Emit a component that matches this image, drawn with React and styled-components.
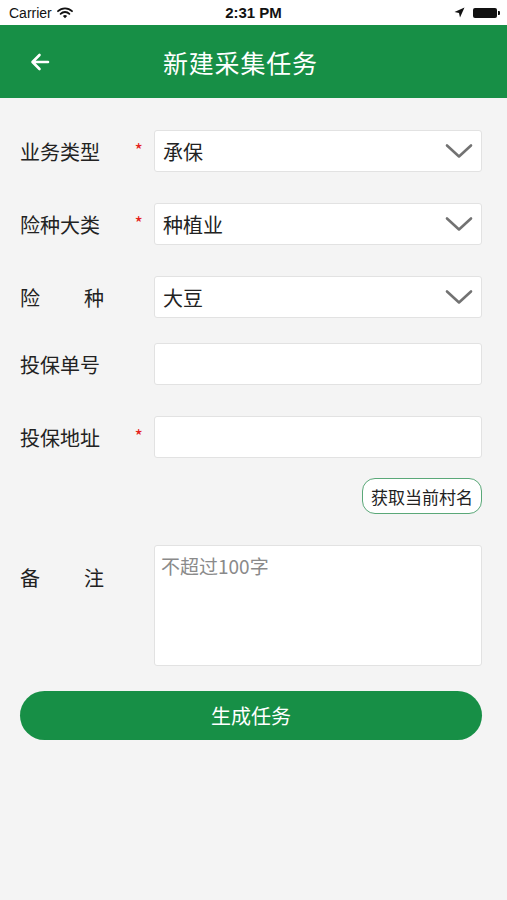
import styled, { createGlobalStyle } from "styled-components"

const GlobalStyle = createGlobalStyle`
  body {
    margin: 0;
    background: #f4f4f4;
    font-family: "Noto Sans CJK SC", "Noto Sans", sans-serif;
  }
`

function App() {
  return (
    <Page>
      <GlobalStyle />
      <StatusBar>
        <Carrier>
          Carrier
          <svg width="16" height="12" viewBox="0 0 16 12">
            <path d="M1 4.2a10 10 0 0 1 14 0" fill="none" stroke="#111" strokeWidth="1.8" strokeLinecap="round" />
            <path d="M3.6 6.8a6.3 6.3 0 0 1 8.8 0" fill="none" stroke="#111" strokeWidth="1.8" strokeLinecap="round" />
            <path d="M8 11.2 5.9 9a3 3 0 0 1 4.2 0z" fill="#111" />
          </svg>
        </Carrier>
        <Clock>2:31 PM</Clock>
        <StatusRight>
          <svg width="11" height="11" viewBox="0 0 11 11">
            <path d="M10.5 0.5 0.5 5 5 6 6 10.5z" fill="#111" />
          </svg>
          <Battery />
        </StatusRight>
      </StatusBar>

      <Header>
        <BackButton>
          <svg width="24" height="24" viewBox="0 0 24 24">
            <path d="M20 12H5M11.5 5 4.5 12l7 7" fill="none" stroke="#fff" strokeWidth="2.6" strokeLinecap="round" strokeLinejoin="round" />
          </svg>
        </BackButton>
        <Title>新建采集任务</Title>
      </Header>

      <Form>
        <Row $top={32}>
          <Label>业务类型</Label>
          <Star>*</Star>
          <Field>
            <FieldText>承保</FieldText>
            <Chevron />
          </Field>
        </Row>
        <Row $top={31}>
          <Label>险种大类</Label>
          <Star>*</Star>
          <Field>
            <FieldText>种植业</FieldText>
            <Chevron />
          </Field>
        </Row>
        <Row $top={31}>
          <Label $spread>险种</Label>
          <Star />
          <Field>
            <FieldText>大豆</FieldText>
            <Chevron />
          </Field>
        </Row>
        <Row $top={25}>
          <Label>投保单号</Label>
          <Star />
          <Field />
        </Row>
        <Row $top={31}>
          <Label>投保地址</Label>
          <Star>*</Star>
          <Field />
        </Row>

        <ActionLine>
          <VillageButton>获取当前村名</VillageButton>
        </ActionLine>

        <NoteRow>
          <Label $spread>备注</Label>
          <Star />
          <NoteBox>不超过100字</NoteBox>
        </NoteRow>

        <SubmitButton>生成任务</SubmitButton>
      </Form>
    </Page>
  )
}

function Chevron() {
  return (
    <ChevronIcon width="28" height="16" viewBox="0 0 28 16">
      <path d="M2 2.5 14 13.5 26 2.5" fill="none" stroke="#727272" strokeWidth="2.6" strokeLinecap="round" strokeLinejoin="round" />
    </ChevronIcon>
  )
}

const Page = styled.div`
  min-height: 900px;
  background: #f4f4f4;
`
const StatusBar = styled.div`
  height: 25px;
  background: #fff;
  display: flex;
  align-items: center;
  justify-content: space-between;
  padding: 0 10px 0 9px;
  font-family: "Liberation Sans", Arial, sans-serif;
  color: #111;
  position: relative;
`
const Carrier = styled.div`
  display: flex;
  align-items: center;
  gap: 5px;
  font-size: 14px;
`
const Clock = styled.div`
  position: absolute;
  left: 0;
  right: 0;
  text-align: center;
  font-size: 15px;
  font-weight: bold;
  pointer-events: none;
`
const StatusRight = styled.div`
  display: flex;
  align-items: center;
  gap: 8px;
`
const Battery = styled.div`
  width: 24px;
  height: 10px;
  background: #111;
  border-radius: 2px;
  position: relative;
  &::after {
    content: "";
    position: absolute;
    right: -3px;
    top: 3px;
    width: 2px;
    height: 4px;
    background: #111;
    border-radius: 0 1px 1px 0;
  }
`
const Header = styled.div`
  height: 73px;
  background: #178f46;
  display: flex;
  align-items: center;
`
const BackButton = styled.div`
  width: 56px;
  padding-left: 28px;
  display: flex;
  align-items: center;
`
const Title = styled.div`
  margin-left: 79px;
  color: #fff;
  font-size: 25px;
  letter-spacing: 0.8px;
`
const Form = styled.div`
  padding: 0 25px 0 20px;
`
const Row = styled.div`
  display: flex;
  align-items: center;
  margin-top: ${(p) => p.$top}px;
`
const Label = styled.div`
  width: 84px;
  font-size: 20px;
  color: #222;
  text-align: ${(p) => (p.$spread ? "justify" : "left")};
  text-align-last: ${(p) => (p.$spread ? "justify" : "left")};
  white-space: nowrap;
`
const Star = styled.div`
  width: 50px;
  color: #e5201a;
  font-size: 18px;
  text-align: right;
  padding-right: 11px;
  box-sizing: border-box;
  margin-top: -4px;
`
const Field = styled.div`
  flex: 1;
  height: 42px;
  box-sizing: border-box;
  background: #fff;
  border: 1px solid #e2e2e2;
  border-radius: 3px;
  display: flex;
  align-items: center;
  justify-content: space-between;
  padding: 0 8px 0 8px;
`
const FieldText = styled.span`
  font-size: 20px;
  color: #222;
`
const ChevronIcon = styled.svg`
  display: block;
`
const ActionLine = styled.div`
  display: flex;
  justify-content: flex-end;
  margin-top: 20px;
`
const VillageButton = styled.div`
  height: 36px;
  box-sizing: border-box;
  padding: 0 8px;
  border: 1.5px solid #5aa878;
  border-radius: 13px;
  background: #fff;
  display: flex;
  align-items: center;
  font-size: 17px;
  color: #222;
`
const NoteRow = styled.div`
  display: flex;
  align-items: flex-start;
  margin-top: 31px;
  & > ${Label} {
    margin-top: 18px;
  }
`
const NoteBox = styled.div`
  flex: 1;
  height: 121px;
  box-sizing: border-box;
  background: #fff;
  border: 1px solid #e2e2e2;
  border-radius: 3px;
  padding: 6px 6px;
  font-size: 19px;
  color: #8a8a8a;
`
const SubmitButton = styled.div`
  margin-top: 25px;
  height: 49px;
  border-radius: 25px;
  background: #178f46;
  color: #fff;
  font-size: 20px;
  display: flex;
  align-items: center;
  justify-content: center;
`

export default App
